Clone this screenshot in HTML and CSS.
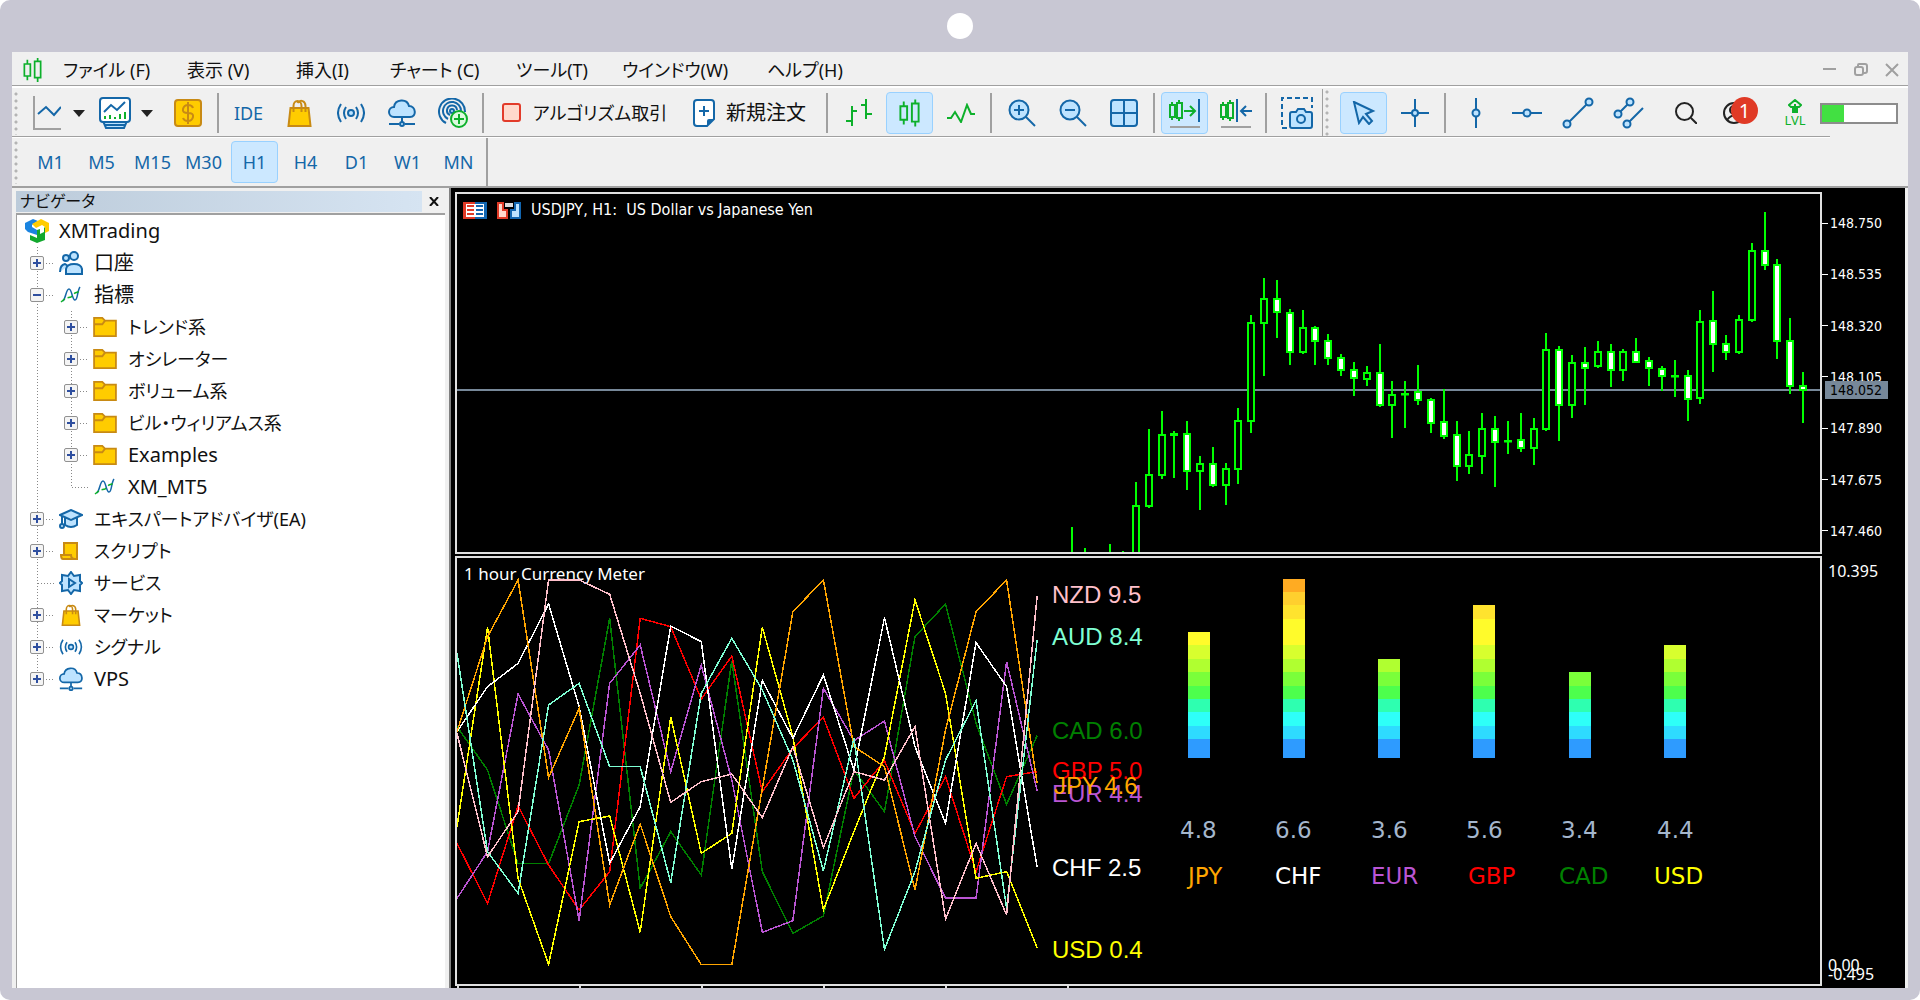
FILE: index.html
```html
<!DOCTYPE html>
<html lang="ja">
<head>
<meta charset="utf-8">
<title>XMTrading</title>
<link rel="stylesheet" href="styles.css">
</head>
<body>
<svg class="sprite" aria-hidden="true">
  <symbol id="i-candles" viewBox="0 0 24 28"><path class="g" d="M6 2v5M6 21v5M2.500 7h7v14h-7zM18 0v4M18 23v5M14.500 4h7v19h-7z"/></symbol>
  <symbol id="i-bag" viewBox="0 0 24 28"><path class="gold" d="M3 9h18l2 18H1z"/><path class="goldline" d="M6 13V7a4 5 0 0 1 8 0v6M10 4c3-4 8-2 8 3v6"/></symbol>
  <symbol id="i-signal" viewBox="0 0 28 20"><circle class="bf" cx="14" cy="10" r="3"/><path class="b" d="M9 4q-4 6 0 12M19 4q4 6 0 12M4 1q-6 9 0 18M24 1q6 9 0 18"/></symbol>
  <symbol id="i-cloud" viewBox="0 0 28 28"><path class="bf" d="M6 18a5 5 0 0 1 0-10C7 0 19-1 21 7c7 0 8 11 1 11z"/><path class="b" d="M14 18v5M1 25h10M17 25h10"/><circle class="bf" cx="14" cy="25" r="2"/></symbol>
  <symbol id="i-folder" viewBox="0 0 26 22"><path class="gold" d="M1 1h9l3 3h12v17H1z"/><path class="goldline" d="M1 8h9l3-4"/></symbol>
  <symbol id="i-ind" viewBox="0 0 22 18"><path class="b slim" d="M3 15C6 12 6 3 9 3s3 11 6 11 2-9 5-13"/><path class="g slim dash" d="M1 16l5-4 5-1 4-4 6-2"/></symbol>
  <symbol id="i-zoom" viewBox="0 0 28 28"><path class="b" d="M18 18l9 9"/><circle class="bf" cx="11" cy="11" r="9.500"/></symbol>
</svg>
<div class="device">
  <div class="bezel"><span class="camera"></span></div>
  <div class="app">
    <header class="menubar">
      <svg class="logo" width="21" height="24"><use href="#i-candles"/></svg>
      <nav class="menus">
        <button>ファイル (F)</button><button>表示 (V)</button><button>挿入(I)</button><button>チャート (C)</button><button>ツール(T)</button><button>ウインドウ(W)</button><button>ヘルプ(H)</button>
      </nav>
      <div class="winbtns">
        <button aria-label="最小化"><svg width="14" height="14"><path d="M0 6h13"/></svg></button>
        <button aria-label="元に戻す"><svg width="14" height="14"><rect x="1" y="4" width="8" height="8" rx="2"/><path d="M4 4V2q0-1 1-1h6q2 0 2 2v5q0 2-2 2h-2"/></svg></button>
        <button aria-label="閉じる"><svg width="14" height="14"><path d="M1 1l12 12M13 1L1 13"/></svg></button>
      </div>
    </header>

    <div class="toolbar">
      <span class="grip"></span>
      <button class="slot narrow" aria-label="チャート"><svg width="28" height="34"><path class="gray" d="M1 0v33h27"/><path class="b" d="M5 18l8-7 8 8 7-8"/></svg></button>
      <button class="caret" aria-label="チャート一覧"></button>
      <button class="slot narrow spaced" aria-label="定型チャート"><svg width="32" height="32"><path class="bf" d="M4 24h24l-3 7H7z"/><rect class="bw" x="1" y="1" width="30" height="24" rx="3"/><path class="b" d="M5 15l7-7 6 5 8-8"/><path class="g" d="M6 22v-3M11 22v-4M16 22v-2M21 22v-5M26 22v-7"/><path class="b" d="M5 28h22"/></svg></button>
      <button class="caret" aria-label="定型チャート一覧"></button>
      <button class="slot after" aria-label="気配値"><svg width="28" height="28"><rect class="gold" x="1" y="1" width="26" height="26" rx="3"/><path class="goldline" d="M19 9q-1-3-5-3t-5 4 5 4 5 4-5 4-5-3M14 3v22"/></svg></button>
      <span class="sep"></span>
      <button class="slot ide">IDE</button>
      <button class="slot" aria-label="マーケット"><svg width="25" height="28"><use href="#i-bag"/></svg></button>
      <button class="slot" aria-label="シグナル"><svg width="28" height="20"><use href="#i-signal"/></svg></button>
      <button class="slot" aria-label="VPS"><svg width="28" height="28"><use href="#i-cloud"/></svg></button>
      <button class="slot" aria-label="コミュニティ"><svg width="30" height="30"><path class="b" d="M8 25A13 13 0 1 1 27 14M10 21a9 9 0 1 1 13-8M12 17a5 5 0 1 1 7-5"/><circle class="bf" cx="14" cy="13" r="2"/><circle class="gp" cx="21" cy="21" r="8"/><path class="g" d="M21 16v10M16 21h10"/></svg></button>
      <span class="sep"></span>
      <button class="wide algo"><svg width="20" height="20"><rect class="stop" x="1" y="1" width="17" height="17" rx="2"/></svg><span>アルゴリズム取引</span></button>
      <button class="wide order"><svg width="22" height="28"><path class="bw" d="M4 1h14q3 0 3 3v16l-7 7H4q-3 0-3-3V4q0-3 3-3z"/><path class="bd" d="M21 20l-7 7v-5q0-2 2-2z"/><path class="b" d="M11 7v10M6 12h10"/></svg><span>新規注文</span></button>
      <span class="sep roomy"></span>
      <button class="slot" aria-label="バーチャート"><svg width="28" height="28"><path class="g" d="M7 7v20M1 22h6M7 12h5M21 0v20M16 6h5M21 15h6"/></svg></button>
      <button class="slot on" aria-label="ローソク足"><svg width="23" height="28"><use href="#i-candles"/></svg></button>
      <button class="slot" aria-label="ラインチャート"><svg width="28" height="20"><path class="g" d="M0 15h4l4-6 6 10 6-17 4 9h4"/></svg></button>
      <span class="sep"></span>
      <button class="slot" aria-label="拡大"><svg width="28" height="28"><use href="#i-zoom"/><path class="b" d="M6 11h10M11 6v10"/></svg></button>
      <button class="slot" aria-label="縮小"><svg width="28" height="28"><use href="#i-zoom"/><path class="b" d="M6 11h10"/></svg></button>
      <button class="slot" aria-label="整列"><svg width="28" height="28"><rect class="bf" x="1" y="1" width="26" height="26" rx="3"/><path class="b" d="M14 1v26M1 14h26"/></svg></button>
      <span class="sep"></span>
      <button class="slot on" aria-label="自動スクロール"><svg width="32" height="30"><path class="g" d="M3 4v3M3 19v3M1 7h5v12H1zM10 2v3M10 20v3M8 5h5v15H8zM15 13h10M21 8l5 5-5 5"/><path class="b" d="M30 1v23"/><path class="gray" d="M1 29h30"/></svg></button>
      <button class="slot" aria-label="チャートシフト"><svg width="32" height="30"><path class="g" d="M3 4v3M3 19v3M1 7h5v12H1zM10 2v3M10 20v3M8 5h5v15H8z"/><path class="b" d="M17 1v23M22 13h10M26 8l-5 5 5 5"/><path class="gray" d="M1 29h30"/></svg></button>
      <span class="sep"></span>
      <button class="slot" aria-label="スクリーンショット"><svg width="32" height="32"><path class="b dash" d="M6 31H1V1h30v10"/><path class="bf" d="M11 15h4l2-3h6l2 3h4q2 0 2 2v12q0 2-2 2H11q-2 0-2-2V17q0-2 2-2z"/><circle class="bf" cx="20" cy="22" r="4"/></svg></button>
      <span class="grip bordered"></span>
      <button class="slot on" aria-label="カーソル"><svg width="24" height="24"><path class="bf" d="M2 1l19 9-7 3 6 7-3 3-6-7-4 6z"/></svg></button>
      <button class="slot" aria-label="十字カーソル"><svg width="28" height="28"><path class="b" d="M14 0v28M0 14h28"/><circle class="bf" cx="14" cy="14" r="3"/></svg></button>
      <span class="sep"></span>
      <button class="slot" aria-label="垂直線"><svg width="28" height="30"><path class="b" d="M14 0v30"/><circle class="bf" cx="14" cy="15" r="3.500"/></svg></button>
      <button class="slot" aria-label="水平線"><svg width="30" height="28"><path class="b" d="M0 14h30"/><circle class="bf" cx="15" cy="14" r="3.500"/></svg></button>
      <button class="slot" aria-label="トレンドライン"><svg width="32" height="32"><path class="b" d="M5 27L27 5"/><circle class="bf" cx="5" cy="27" r="3.500"/><circle class="bf" cx="27" cy="5" r="3.500"/></svg></button>
      <button class="slot" aria-label="チャネル"><svg width="32" height="32"><path class="b" d="M5 17L17 5M14 27l16-16"/><circle class="bf" cx="5" cy="17" r="3.500"/><circle class="bf" cx="17" cy="5" r="3.500"/><circle class="bf" cx="14" cy="27" r="3.500"/></svg></button>
      <button class="slot after" aria-label="検索"><svg width="22" height="22"><circle class="k" cx="9.500" cy="9.500" r="8.500"/><path class="k" d="M16 16l6 6"/></svg></button>
      <button class="slot user" aria-label="通知 1件"><svg width="22" height="22"><circle class="k" cx="11" cy="11" r="10"/><circle class="k" cx="11" cy="8" r="4"/><path class="k" d="M4 18q7-9 14 0"/></svg><span class="badge">1</span></button>
      <button class="slot narrow level"><svg width="14" height="14"><path class="g" d="M7 1l6 5-2 2H9v5H5V8H3L1 6zM7 5v8"/></svg><span>LVL</span></button>
      <div class="gauge" role="meter" aria-valuenow="30" aria-label="レベル"><div class="gauge-fill"></div></div>
    </div>

    <div class="timeframes">
      <span class="grip"></span>
      <button>M1</button><button>M5</button><button>M15</button><button>M30</button><button class="on">H1</button><button>H4</button><button>D1</button><button>W1</button><button>MN</button>
    </div>

    <main class="workspace">
      <aside class="navigator">
        <div class="nav-head"><h2>ナビゲータ</h2><button aria-label="閉じる"><svg width="10" height="9"><path d="M1 0l8 9M9 0L1 9"/></svg></button></div>
        <div class="tree">
          <div class="root"><svg width="24" height="24"><path d="M0 4l8-4 5 2-6 4v2l5 3v5L3 13 0 10z" fill="#1a84e0"/><path d="M7 5l9-5 8 4v8l-4 2V8l-3-2-6 3z" fill="#fc0"/><path d="M12 11l3-1v5l4-2V9l1-1v13l-8 3-7-3v-5l7 3z" fill="#12a82e"/></svg><span>XMTrading</span></div>
          <ul>
            <li><div class="row"><button class="exp" aria-label="展開"></button><svg class="ico" width="24" height="24" viewBox="0 0 24 24"><circle class="bf" cx="7" cy="7" r="3"/><circle class="bf" cx="15" cy="5" r="4"/><path class="bf" d="M1 21q0-7 5-8l3 2M7 23v-5q1-5 8-5t8 5v5z"/></svg><span>口座</span></div></li>
            <li><div class="row"><button class="exp open" aria-label="折りたたむ"></button><svg class="ico" width="24" height="18"><use href="#i-ind"/></svg><span>指標</span></div>
              <ul>
                <li><div class="row"><button class="exp" aria-label="展開"></button><svg class="ico" width="24" height="20"><use href="#i-folder"/></svg><span class="kana">トレンド系</span></div></li>
                <li><div class="row"><button class="exp" aria-label="展開"></button><svg class="ico" width="24" height="20"><use href="#i-folder"/></svg><span class="kana">オシレーター</span></div></li>
                <li><div class="row"><button class="exp" aria-label="展開"></button><svg class="ico" width="24" height="20"><use href="#i-folder"/></svg><span class="kana">ボリューム系</span></div></li>
                <li><div class="row"><button class="exp" aria-label="展開"></button><svg class="ico" width="24" height="20"><use href="#i-folder"/></svg><span class="kana">ビル・ウィリアムス系</span></div></li>
                <li><div class="row"><button class="exp" aria-label="展開"></button><svg class="ico" width="24" height="20"><use href="#i-folder"/></svg><span>Examples</span></div></li>
                <li><div class="row leaf"><svg class="ico" width="24" height="18"><use href="#i-ind"/></svg><span>XM_MT5</span></div></li>
              </ul>
            </li>
            <li><div class="row"><button class="exp" aria-label="展開"></button><svg class="ico" width="24" height="20"><path class="bf" d="M1 6l11-5 11 5-11 5zM6 9v7q6 4 12 0V9"/><path class="b" d="M3 7v8"/><circle class="bf" cx="3" cy="17" r="2"/></svg><span class="kana">エキスパートアドバイザ(EA)</span></div></li>
            <li><div class="row"><button class="exp" aria-label="展開"></button><svg class="ico" width="24" height="18"><path class="gold" d="M5 1h13v16H4q-2 0-2-4h3z"/><path class="goldline" d="M2 13h10q0 4 4 4"/></svg><span class="kana">スクリプト</span></div></li>
            <li><div class="row leaf"><svg class="ico" width="24" height="24"><path class="bf" d="M12 1l3 4 6-1v6l2 2-2 2v6l-6-1-3 4-3-4-6 1v-6l-2-2 2-2V4l6 1z"/><path class="bf" d="M10 8v8l6-4z"/></svg><span class="kana">サービス</span></div></li>
            <li><div class="row"><button class="exp" aria-label="展開"></button><svg class="ico" width="24" height="22"><use href="#i-bag"/></svg><span class="kana">マーケット</span></div></li>
            <li><div class="row"><button class="exp" aria-label="展開"></button><svg class="ico" width="24" height="16"><use href="#i-signal"/></svg><span class="kana">シグナル</span></div></li>
            <li><div class="row"><button class="exp" aria-label="展開"></button><svg class="ico" width="24" height="24"><use href="#i-cloud"/></svg><span>VPS</span></div></li>
          </ul>
        </div>
      </aside>

      <section class="charts">
        <div class="pane price">
          <div class="plot">
            <div class="plot-title">
              <svg width="24" height="17"><path fill="#e03a26" d="M0 0h12v17H0z"/><path fill="#1266b0" d="M12 0h12v17H12z"/><path fill="#fff" d="M3 2h18v13H3z"/><path stroke="#e03a26" stroke-width="2" d="M4 4h7M4 8h7M4 12h7"/><path stroke="#1266b0" stroke-width="2" d="M13 4h7M13 8h7M13 12h7"/></svg>
              <svg width="24" height="17"><path fill="#ffd8cc" stroke="#e03a26" stroke-width="2" d="M1 1h5v7h4v8H1z"/><path fill="#bde3ff" stroke="#1266b0" stroke-width="2" d="M23 1h-5v7h-4v8h9z"/><path fill="#ddd" d="M8 1h8v4H8z"/></svg>
              <span>USDJPY, H1:&nbsp; US Dollar vs Japanese Yen</span>
            </div>
            <svg id="candles" class="canvas" viewBox="457 194 1363 358" preserveAspectRatio="none"><path class="bid" d="M457 390H1820"/></svg>
          </div>
          <div class="axis">
            <ol class="prices"><li>148.750</li><li>148.535</li><li>148.320</li><li>148.105</li><li>147.890</li><li>147.675</li><li>147.460</li></ol>
            <span class="bid-tag">148.052</span>
          </div>
        </div>
        <div class="pane meter">
          <div class="plot">
            <svg class="canvas" viewBox="457 558 1363 426" preserveAspectRatio="none">
              <text class="caption" x="464" y="580">1 hour Currency Meter</text>
              <g id="lines" transform="translate(450 550) scale(.33333)"></g>
              <g id="bars"></g>
              <g class="strength">
                <text x="1052" y="603" fill="#ffc0cb">NZD 9.5</text>
                <text x="1052" y="645" fill="#7fffd4">AUD 8.4</text>
                <text x="1052" y="739" fill="#008000">CAD 6.0</text>
                <text x="1052" y="779" fill="#f00">GBP 5.0</text>
                <text x="1052" y="802" fill="#ba55d3">EUR 4.4</text>
                <text x="1054" y="794" fill="#ffa500">JPY 4.6</text>
                <text x="1052" y="876" fill="#fff">CHF 2.5</text>
                <text x="1052" y="958" fill="#ff0">USD 0.4</text>
              </g>
              <g class="readings">
                <text x="1180" y="838">4.8</text><text x="1275" y="838">6.6</text><text x="1371" y="838">3.6</text><text x="1466" y="838">5.6</text><text x="1561" y="838">3.4</text><text x="1657" y="838">4.4</text>
                <text x="1188" y="884" fill="#ffa500">JPY</text><text x="1275" y="884" fill="#fff">CHF</text><text x="1371" y="884" fill="#ba55d3">EUR</text><text x="1468" y="884" fill="#f00">GBP</text><text x="1559" y="884" fill="#008000">CAD</text><text x="1654" y="884" fill="#ff0">USD</text>
              </g>
            </svg>
          </div>
          <div class="axis range"><span class="max">10.395</span><span class="zero">0.00</span><span class="min">-0.495</span></div>
        </div>
        <div class="timeticks"><i></i><i></i><i></i><i></i><i></i><i></i></div>
      </section>
    </main>
  </div>
</div>
<script src="script.js"></script>
</body>
</html>
```
FILE: styles.css
```css
* { box-sizing: border-box; }
body {
  margin: 0;
  background: #fff;
  color: #111;
  font: 20px/24px "Noto Sans", "Noto Sans CJK JP", sans-serif;
  font-feature-settings: "palt";
}
button { margin: 0; padding: 0; border: 0; background: none; color: inherit; font: inherit; font-feature-settings: inherit; }
ul, ol { margin: 0; padding: 0; list-style: none; }
svg { flex: none; fill: none; }
.sprite { position: absolute; width: 0; height: 0; }

.b { stroke: #1467a8; stroke-width: 2; fill: none; }
.bf { stroke: #1467a8; stroke-width: 2; fill: #bde3ff; }
.bw { stroke: #1467a8; stroke-width: 2; fill: #fff; }
.bd { fill: #1467a8; }
.g { stroke: #0db02b; stroke-width: 2; fill: none; }
.gp { stroke: #0db02b; stroke-width: 2; fill: #dcfadf; }
.gold { stroke: #c88a14; stroke-width: 2; fill: #fc0; }
.goldline { stroke: #c88a14; stroke-width: 2; fill: none; }
.gray { stroke: #a0a0a0; stroke-width: 2; fill: none; }
.k { stroke: #222; stroke-width: 2; fill: none; }
.stop { stroke: #e23b2a; stroke-width: 2; fill: #ffd9cc; }
.dash { stroke-dasharray: 5 3; }

.device {
  display: flex;
  flex-direction: column;
  min-height: 100vh;
  padding: 0 12px 12px;
  border-radius: 10px;
  background: #c8c7d3;
}
.bezel { display: flex; justify-content: center; align-items: center; height: 52px; }
.camera { width: 26px; height: 26px; border-radius: 50%; background: #fff; }
.app { display: flex; flex-direction: column; flex: 1; background: #f0f0f0; }

.menubar {
  display: flex;
  align-items: center;
  height: 36px;
  padding: 1px 9px 0 10px;
  border-bottom: 2px solid #fff;
  box-shadow: inset 0 -1px #a0a0a0;
}
.logo { margin-right: 20px; }
.menus {
  display: grid;
  grid-template-columns: 124px 109px 94px 126px 106px 145px 90px;
  flex: 1;
  font-size: 18px;
}
.menus button { text-align: left; white-space: nowrap; }
.winbtns { display: flex; gap: 17px; }
.winbtns svg { display: block; stroke: #a0a0a0; stroke-width: 2; }

.toolbar, .timeframes { display: flex; align-items: center; height: 50px; }
.toolbar { background: linear-gradient(#a0a0a0, #a0a0a0) 0 48px / calc(100% - 78px) 1px no-repeat, linear-gradient(#fff, #fff) 0 49px / calc(100% - 78px) 1px no-repeat; padding-right: 10px; }
.grip { flex: none; width: 12px; height: 44px; background: radial-gradient(circle at 4px 3px, #b4b4b4 1px, transparent 2px) 0 0 / 12px 7px; }
.grip.bordered { width: 16px; height: 48px; border-left: 1px solid #a0a0a0; background-size: 16px 7px; background-repeat: repeat-y; }
.slot { display: flex; flex: none; justify-content: center; align-items: center; width: 51px; height: 42px; }
.slot.narrow { width: 46px; }
.slot.spaced { margin-left: 4px; }
.slot.after { margin-left: 6px; }
.on { background: #cce8ff; border: 1px solid #99d1ff; border-radius: 4px; }
.slot.on { width: 47px; margin: 0 2px; }
.slot.ide { color: #1467a8; font-size: 18px; }
.caret { flex: none; width: 18px; height: 42px; padding: 0 3px; }
.caret::before { content: ""; display: block; border: 6px solid transparent; border-top: 7px solid #222; border-bottom: 0; }
.sep { flex: none; width: 10px; height: 40px; background: linear-gradient(#a0a0a0, #a0a0a0) center / 2px 100% no-repeat; }
.sep.roomy { width: 12px; }
.wide { display: flex; flex: none; align-items: center; gap: 11px; white-space: nowrap; }
.wide.algo { width: 192px; padding-left: 14px; font-size: 18px; }
.wide.order { width: 141px; padding-left: 13px; }
.user { position: relative; padding-right: 6px; }
.badge {
  position: absolute;
  top: 5px;
  left: 20px;
  width: 27px;
  height: 27px;
  border-radius: 50%;
  background: #e03a26;
  color: #fff;
  line-height: 27px;
  text-align: center;
}
.level { flex-direction: column; margin-left: 10px; color: #0db02b; font-size: 13px; line-height: 14px; }
.gauge { width: 79px; height: 21px; margin-left: 2px; border: 2px solid #8c8c8c; background: #fff; }
.gauge-fill { width: 30%; height: 100%; background: #42e042; }

.timeframes {
  align-self: flex-start;
  height: 48px;
  padding-right: 2px;
  border-right: 2px solid #a0a0a0;
  color: #1467a8;
  font-size: 18px;
}
.timeframes button { width: 47px; height: 42px; margin: 0 2px; }
.timeframes .grip + button { margin-left: 3px; }

.workspace { display: flex; flex: 1; border-top: 2px solid #a0a0a0; }
.navigator { display: flex; flex-direction: column; flex: none; width: 437px; padding: 2px 4px 0 4px; }
.nav-head { display: flex; align-items: center; gap: 7px; height: 23px; }
.nav-head h2 {
  flex: 1;
  height: 21px;
  margin: 0;
  padding-left: 4px;
  background: linear-gradient(90deg, #bccbda, #d6e4f2);
  font-size: 16px;
  font-weight: 400;
  line-height: 20px;
}
.nav-head button { display: flex; width: 16px; }
.nav-head svg { stroke: #111; stroke-width: 2; }
.tree { flex: 1; border: 1px solid #a0a0a0; border-width: 2px 0 0 1px; background: #fff; }
.root { display: flex; align-items: center; gap: 10px; height: 32px; padding-left: 8px; }
.tree ul { background: repeating-linear-gradient(#888 0 1px, transparent 1px 3px) 20px 0 / 1px calc(100% - 16px) no-repeat; }
.tree ul ul { margin-left: 34px; }
.row { display: flex; align-items: center; height: 32px; padding-left: 13px; white-space: nowrap; }
.exp {
  width: 14px;
  height: 14px;
  border: 1px solid #919191;
  border-radius: 2px;
  background: linear-gradient(#2f4f9f, #2f4f9f) center / 8px 2px no-repeat, linear-gradient(#2f4f9f, #2f4f9f) center / 2px 8px no-repeat, #f4f4f4;
}
.exp.open { background: linear-gradient(#2f4f9f, #2f4f9f) center / 8px 2px no-repeat, #f4f4f4; }
.row::before { content: ""; order: 1; width: 9px; height: 1px; margin: 0 4px 0 2px; background: repeating-linear-gradient(90deg, #888 0 1px, transparent 1px 3px); }
.row.leaf::before { width: 17px; margin-left: 8px; }
.ico { order: 2; margin-right: 11px; }
.row span { order: 3; }
.kana { font-size: 18px; }

.charts {
  display: flex;
  flex: 1;
  flex-direction: column;
  min-width: 0;
  margin-right: 3px;
  padding: 4px 0 0 4px;
  border-left: 2px solid #808080;
  background: #000;
  color: #fff;
  font-family: "DejaVu Sans Condensed", "Noto Sans", sans-serif;
}
.pane { display: flex; flex: 362 0 0; min-height: 0; }
.pane.meter { flex-grow: 430; margin-top: 2px; }
.plot { position: relative; flex: 1; min-width: 0; border: 2px solid #e0e0e0; }
.canvas { display: block; position: absolute; inset: 0; width: 100%; height: 100%; }
.plot-title { display: flex; align-items: center; gap: 10px; padding: 6px; font-size: 16px; line-height: 20px; white-space: nowrap; }
.axis { position: relative; flex: none; width: 83px; font-size: 14px; line-height: 16px; }
.prices { display: flex; flex-direction: column; justify-content: space-between; height: 100%; padding: 23px 0 15px; }
.prices li { display: flex; align-items: center; gap: 2px; }
.prices li::before { content: ""; width: 6px; height: 1px; background: #fff; }
.bid-tag { position: absolute; top: 189px; left: 3px; padding: 1px 6px 1px 5px; background: #778899; color: #000; }
.bid { stroke: #778899; stroke-width: 2; }
.candle { stroke: #0f0; stroke-width: 2; fill: #000; }
.candle.down { fill: #fff; }
.wick { stroke: #0f0; stroke-width: 2; }

.caption, .strength, .readings { fill: #fff; }
.caption { font: 17px "Noto Sans", sans-serif; }
.strength { font: 24px "Liberation Sans", sans-serif; }
.readings { font: 23px "DejaVu Sans", sans-serif; fill: #a4b6cc; }
.series { stroke-width: 1.5px; vector-effect: non-scaling-stroke; fill: none; shape-rendering: crispEdges; }
#bars, .bid, .wick { shape-rendering: crispEdges; }
.range { font: 16px/18px "Noto Sans", sans-serif; }
.range span { position: absolute; left: 6px; }
.range .max { top: 6px; }
.range .zero { bottom: 12px; }
.range .min { bottom: 3px; }
.timeticks { display: flex; gap: 120px; height: 2px; padding-left: 2px; }
.timeticks i { width: 2px; background: #ddd; }
.slim { stroke-width: 1.5px; }
```
FILE: script.js
```js
const NS = "http://www.w3.org/2000/svg";
function add(parent, name, attrs) {
  const el = document.createElementNS(NS, name);
  for (const key in attrs) el.setAttribute(key, attrs[key]);
  parent.appendChild(el);
}

// Each candle: slot, high, low, body top, body bottom, direction (u / d).
const candles = [
  [0,527,560], [1,548,560], [3,544,560], [4,551,560],
  [5,482,560,505,560,"u"], [6,429,508,474,506,"u"], [7,411,479,434,475,"u"], [8,431,478,433,435,"u"],
  [9,421,490,433,471,"d"], [10,456,510,463,471,"u"], [11,447,487,463,485,"d"], [12,463,505,468,485,"u"],
  [13,408,484,420,469,"u"], [14,315,433,322,421,"u"], [15,278,376,298,323,"u"], [16,280,338,298,312,"d"],
  [17,309,365,312,352,"d"], [18,310,354,327,352,"u"], [19,326,365,327,341,"d"], [20,334,365,340,358,"d"],
  [21,354,376,357,370,"d"], [22,362,396,369,378,"d"], [23,366,386,372,379,"u"], [24,344,407,372,405,"d"],
  [25,381,438,394,405,"u"], [26,381,428,393,394,"u"], [27,365,405,391,400,"d"], [28,398,433,399,423,"d"],
  [29,389,439,421,436,"d"], [30,421,481,434,466,"d"], [31,431,474,454,466,"u"], [32,413,474,428,456,"u"],
  [33,416,487,428,442,"d"], [34,421,454,440,441,"u"], [35,413,452,439,448,"d"], [36,418,465,428,448,"u"],
  [37,333,431,349,429,"u"], [38,346,441,349,405,"d"], [39,355,418,362,405,"u"], [40,347,405,362,368,"d"],
  [41,341,368,351,366,"u"], [42,344,387,351,370,"d"], [43,349,381,351,370,"u"], [44,338,363,351,362,"d"],
  [45,357,386,360,368,"d"], [46,366,391,368,376,"d"], [47,360,397,375,375,"u"], [48,370,421,375,399,"d"],
  [49,310,404,321,398,"u"], [50,291,372,320,344,"d"], [51,335,360,343,352,"d"], [52,315,354,319,352,"u"],
  [53,243,322,250,320,"u"], [54,212,270,250,265,"d"], [55,259,359,264,341,"d"], [56,318,394,340,386,"d"],
  [57,372,423,385,390,"d"]
];
const chart = document.getElementById("candles");
for (const [slot, high, low, top, bottom, dir] of candles) {
  const x = Math.round(1071.7 + slot * 12.83);
  add(chart, "path", { class: "wick", d: `M${x} ${high}V${low}` });
  if (dir) add(chart, "rect", { class: dir === "d" ? "candle down" : "candle", x: x - 3, y: top + 1, width: 6, height: Math.max(bottom - top - 1, 0.5) });
}

// Strength curves, oldest hour first.
const series = {
  "#008000": [530,660,941,941,705,205,1015,845,975,332,965,1150,1098,660,785,260,162,520,763,557],
  "#ff0000": [880,1060,768,945,1080,965,205,230,447,318,725,595,502,745,632,850,680,965,680,665],
  "#ba55d3": [1045,905,432,600,1112,400,285,665,345,690,1147,1112,415,572,513,860,1044,1044,335,722],
  "#ffff00": [830,232,985,1243,815,798,1147,500,910,850,232,560,1080,845,620,150,430,985,965,1193],
  "#ffffff": [545,410,340,162,470,940,770,228,275,958,392,565,375,660,203,590,820,278,410,952],
  "#ffa500": [545,260,90,683,475,1065,822,1100,1244,1244,715,185,90,590,650,1020,540,185,90,700],
  "#7fffd4": [310,905,1030,465,400,650,650,998,430,265,420,630,963,565,1198,965,630,452,1075,270],
  "#ffc0cb": [550,920,785,90,90,133,430,757,695,672,803,590,892,665,690,530,1107,880,1095,138]
};
const lines = document.getElementById("lines");
for (const color in series) {
  add(lines, "polyline", { class: "series", stroke: color, points: series[color].map((y, i) => `${21 + i * 91.6},${y}`).join(" ") });
}

const ramp = ["#2e9bff", "#2edbff", "#2efff8", "#2effb0", "#4dff4d", "#7aff3a", "#b0ff30", "#d8ff2e", "#fffb2b", "#fffb2b", "#ffe32e", "#ffcf2e", "#ffab22"];
const bars = document.getElementById("bars");
[9, 13, 7, 11, 6, 8].forEach((count, i) => {
  for (let n = 0; n < count; n++) {
    const top = Math.round(739 - n * 13.36);
    const bottom = n ? Math.round(739 - (n - 1) * 13.36) : 758;
    add(bars, "rect", { x: Math.round(1187.5 + i * 95.3), y: top, width: 22, height: bottom - top, fill: ramp[n] });
  }
});
```
